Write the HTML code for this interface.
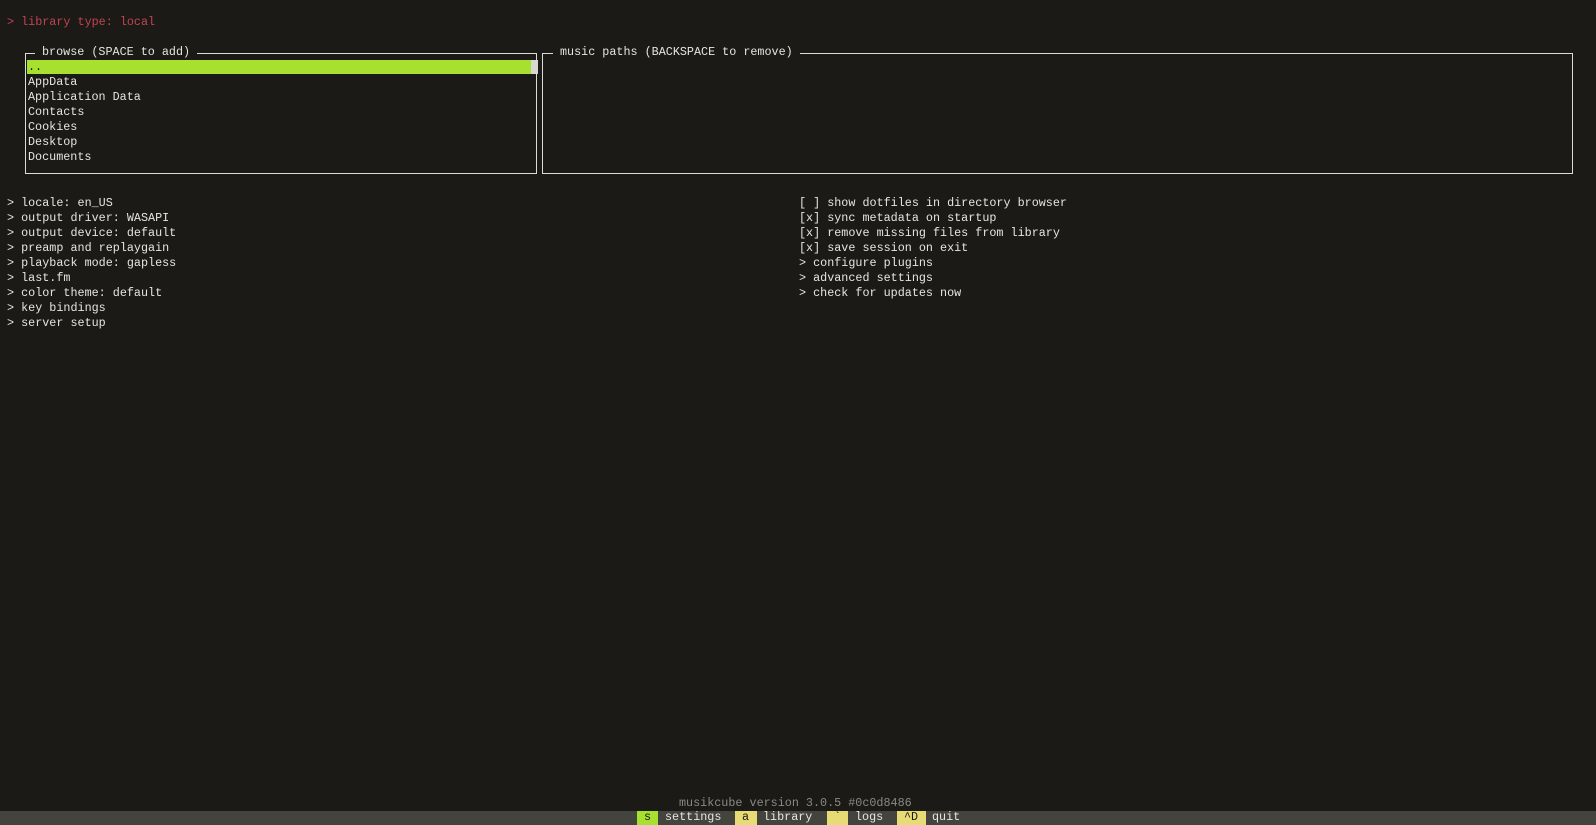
<!DOCTYPE html>
<html><head><meta charset="utf-8"><style>
html,body{margin:0;padding:0;background:#1b1a17;width:1596px;height:825px;overflow:hidden}
body{font-family:"Liberation Mono",monospace;font-size:11.75px;color:#e6e6df;position:relative}
.r{position:absolute;white-space:pre;line-height:15px;height:15px}
.b{position:absolute;border:1px solid #dcdcd6}
.t{position:absolute;white-space:pre;background:#1b1a17;line-height:15px;padding:0 7px}
</style></head><body>
<div class="r" style="left:7px;top:15px;color:#c24450">&gt; library type: local</div>

<div class="b" style="left:25px;top:53px;width:510px;height:119px"></div>
<div class="t" style="left:35px;top:45px">browse (SPACE to add)</div>
<div style="position:absolute;left:27px;top:60px;width:504px;height:14px;background:#a8e030"></div>
<div style="position:absolute;left:531px;top:60px;width:7px;height:14px;background:#d8d8d0"></div>
<div class="r" style="left:28px;top:60px;color:#1b1a17">..</div>
<div class="r" style="left:28px;top:75px">AppData</div>
<div class="r" style="left:28px;top:90px">Application Data</div>
<div class="r" style="left:28px;top:105px">Contacts</div>
<div class="r" style="left:28px;top:120px">Cookies</div>
<div class="r" style="left:28px;top:135px">Desktop</div>
<div class="r" style="left:28px;top:150px">Documents</div>

<div class="b" style="left:542px;top:53px;width:1029px;height:119px"></div>
<div class="t" style="left:553px;top:45px">music paths (BACKSPACE to remove)</div>

<div class="r" style="left:7px;top:196px">&gt; locale: en_US</div>
<div class="r" style="left:7px;top:211px">&gt; output driver: WASAPI</div>
<div class="r" style="left:7px;top:226px">&gt; output device: default</div>
<div class="r" style="left:7px;top:241px">&gt; preamp and replaygain</div>
<div class="r" style="left:7px;top:256px">&gt; playback mode: gapless</div>
<div class="r" style="left:7px;top:271px">&gt; last.fm</div>
<div class="r" style="left:7px;top:286px">&gt; color theme: default</div>
<div class="r" style="left:7px;top:301px">&gt; key bindings</div>
<div class="r" style="left:7px;top:316px">&gt; server setup</div>

<div class="r" style="left:799px;top:196px">[ ] show dotfiles in directory browser</div>
<div class="r" style="left:799px;top:211px">[x] sync metadata on startup</div>
<div class="r" style="left:799px;top:226px">[x] remove missing files from library</div>
<div class="r" style="left:799px;top:241px">[x] save session on exit</div>
<div class="r" style="left:799px;top:256px">&gt; configure plugins</div>
<div class="r" style="left:799px;top:271px">&gt; advanced settings</div>
<div class="r" style="left:799px;top:286px">&gt; check for updates now</div>

<div class="r" style="left:679px;top:796px;color:#8a8a84">musikcube version 3.0.5 #0c0d8486</div>
<div style="position:absolute;left:0;top:811px;width:1596px;height:14px;background:#44443e"></div>
<div style="position:absolute;left:637px;top:811px;width:21px;height:14px;background:#a8e030"></div>
<div style="position:absolute;left:735px;top:811px;width:22px;height:14px;background:#e6db74"></div>
<div style="position:absolute;left:827px;top:811px;width:21px;height:14px;background:#e6db74"></div>
<div style="position:absolute;left:897px;top:811px;width:29px;height:14px;background:#e6db74"></div>
<div class="r" style="left:644px;top:810px;color:#1b1a17">s</div>
<div class="r" style="left:665px;top:810px">settings</div>
<div class="r" style="left:742px;top:810px;color:#1b1a17">a</div>
<div class="r" style="left:763px;top:810px">library</div>
<div class="r" style="left:834px;top:810px;color:#1b1a17">`</div>
<div class="r" style="left:855px;top:810px">logs</div>
<div class="r" style="left:904px;top:810px;color:#1b1a17">^D</div>
<div class="r" style="left:932px;top:810px">quit</div>
</body></html>
